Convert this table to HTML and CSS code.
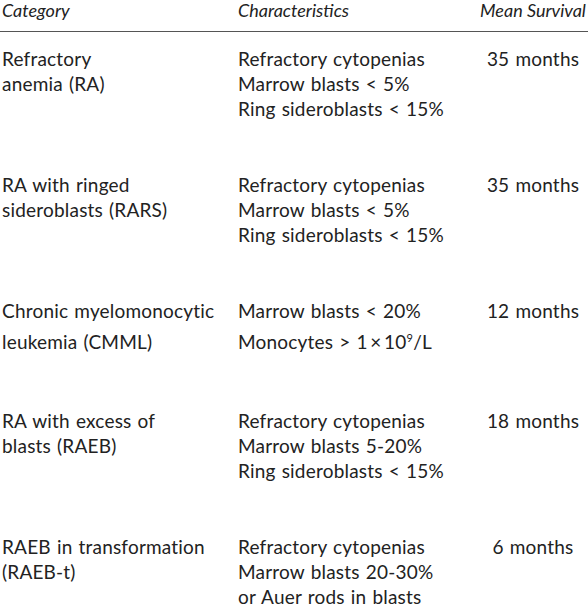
FILE: index.html
```html
<!DOCTYPE html>
<html>
<head>
<meta charset="utf-8">
<link rel="stylesheet" href="styles.css">
</head>
<body>
<div class="table">
  <div class="row head">
    <div class="cell">Category</div>
    <div class="cell">Characteristics</div>
    <div class="cell c3">Mean Survival</div>
  </div>
  <div class="rule"></div>
  <div class="row">
    <div class="cell">Refractory<br>anemia (RA)</div>
    <div class="cell">Refractory cytopenias<br>Marrow blasts &lt; 5%<br>Ring sideroblasts &lt; 15%</div>
    <div class="cell c3">35 months</div>
  </div>
  <div class="row">
    <div class="cell">RA with ringed<br>sideroblasts (RARS)</div>
    <div class="cell">Refractory cytopenias<br>Marrow blasts &lt; 5%<br>Ring sideroblasts &lt; 15%</div>
    <div class="cell c3">35 months</div>
  </div>
  <div class="row short">
    <div class="cell"><div>Chronic myelomonocytic</div><div class="tall">leukemia (CMML)</div></div>
    <div class="cell"><div>Marrow blasts &lt; 20%</div><div class="tall">Monocytes &gt; 1&#x2009;&times;&#x2009;10<sup>9</sup>/L</div></div>
    <div class="cell c3">12 months</div>
  </div>
  <div class="row">
    <div class="cell">RA with excess of<br>blasts (RAEB)</div>
    <div class="cell">Refractory cytopenias<br>Marrow blasts 5-20%<br>Ring sideroblasts &lt; 15%</div>
    <div class="cell c3">18 months</div>
  </div>
  <div class="row">
    <div class="cell">RAEB in transformation<br>(RAEB-t)</div>
    <div class="cell">Refractory cytopenias<br>Marrow blasts 20-30%<br>or Auer rods in blasts</div>
    <div class="cell c3">6 months</div>
  </div>
</div>
</body>
</html>
```

FILE: styles.css
```css
html, body {
  margin: 0;
  padding: 0;
  background: #ffffff;
}
body {
  font-family: Lato, "Open Sans", sans-serif;
  font-size: 19px;
  line-height: 25px;
  letter-spacing: 0.2px;
  word-spacing: 1px;
  color: #222222;
  overflow: hidden;
}
.table {
  padding-left: 2px;
  width: 586px;
}
.row {
  display: grid;
  grid-template-columns: 236px 240px 110px;
  padding-bottom: 51px;
}
.row.short {
  padding-bottom: 54px;
}
.row.head {
  padding-bottom: 0;
  height: 20px;
  line-height: 20px;
  font-size: 18px;
  letter-spacing: 0;
  word-spacing: 0;
}
.head .cell {
  font-style: italic;
}
.rule {
  height: 1px;
  background: #555;
  margin: 11px 0 14px -2px;
  width: 588px;
}
.c3 {
  text-align: center;
  white-space: nowrap;
}
.tall {
  padding-top: 6px;
}
sup {
  font-size: 11px;
  line-height: 0;
  vertical-align: 7px;
}
```
